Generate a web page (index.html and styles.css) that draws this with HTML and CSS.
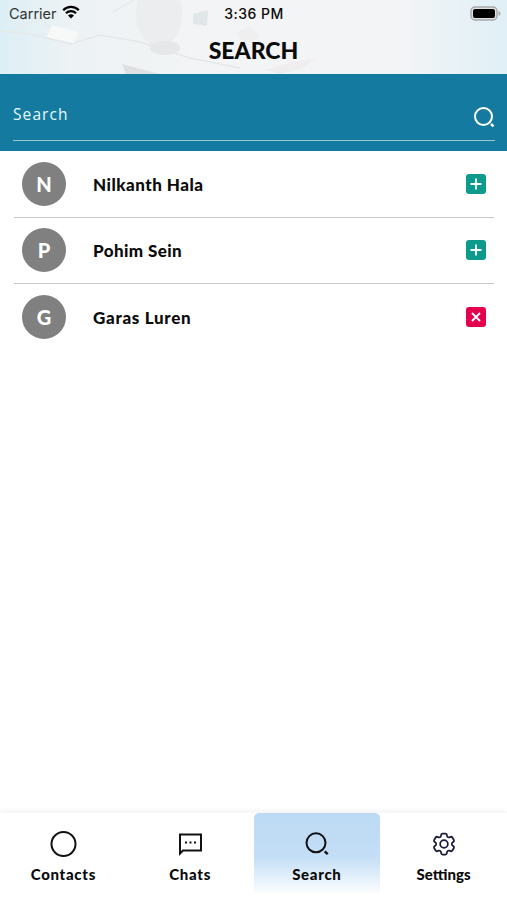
FILE: index.html
```
<!DOCTYPE html>
<html lang="en">
<head>
    <meta charset="UTF-8">
    <meta name="viewport" content="width=device-width, initial-scale=1">
    <title>Search</title>
    <link rel="stylesheet" href="styles.css">
</head>
<body>
    <div class="header">
        <svg class="header-bg" width="507" height="74" viewBox="0 0 507 74">
            <ellipse cx="159" cy="14" rx="23" ry="33" fill="#ebedee"/>
            <ellipse cx="165" cy="48" rx="15" ry="7" fill="#e6e7e8"/>
            <path d="M0 31 35 35 70 44 100 35 140 42 190 58 240 68" fill="none" stroke="#e5e8ea" stroke-width="1.5"/>
            <path d="M10 32 40 18 65 42M113 12 134 0" fill="none" stroke="#e8ebec" stroke-width="2"/>
            <path d="M52 25 78 32 74 43 47 37Z" fill="#f7f9f9"/>
            <path d="M193 14 208 10 207 26 193 24Z" fill="#e1e6e9"/>
            <path d="M122 64 160 74H126Z" fill="#dfe0e2"/>
            <path d="M266 70 292 62 316 58 303 68 280 74Z" fill="#efedee"/>
            <path d="M236 33 250 26 260 38 244 42Z" fill="#efeff0"/>
        </svg>
        <div class="status">
            <div class="carrier">
                <span>Carrier</span>
                <svg width="18" height="14" viewBox="0 0 18 14">
                    <path d="M1.2 5.2a11 11 0 0 1 15.6 0M4 8.2a7 7 0 0 1 10 0" fill="none" stroke="#000" stroke-width="2.3"/>
                    <path d="M9 13.6 6 10.6a4.3 4.3 0 0 1 6 0Z"/>
                </svg>
            </div>
            <span class="time">3:36 PM</span>
            <svg class="battery" width="31" height="15" viewBox="0 0 31 15">
                <rect x="1" y="1" width="26" height="13" rx="4" fill="#e0e2e3" stroke="#a5a8aa" stroke-width="1.4"/>
                <rect x="3" y="3" width="22" height="9" rx="2"/>
                <path d="M28.5 5q2 .8 2 2.5t-2 2.5Z" fill="#a5a8aa"/>
            </svg>
        </div>
        <h1>SEARCH</h1>
    </div>

    <div class="search-area">
        <div class="search-box">
            <span>Search</span>
            <svg width="22" height="22" viewBox="0 0 22 22" fill="none" stroke="#fff" stroke-width="2">
                <circle cx="10.5" cy="10.5" r="8.5"/>
                <path d="m18 18 2.5 2.3" stroke-width="2.4"/>
            </svg>
        </div>
    </div>

    <div class="list">
        <div class="row">
            <div class="avatar">N</div>
            <div class="name name-1">Nilkanth Hala</div>
            <div class="action">
                <svg width="12" height="12" viewBox="0 0 12 12"><path d="M6 .5v11M.5 6h11"/></svg>
            </div>
        </div>
        <div class="row">
            <div class="avatar">P</div>
            <div class="name name-2">Pohim Sein</div>
            <div class="action">
                <svg width="12" height="12" viewBox="0 0 12 12"><path d="M6 .5v11M.5 6h11"/></svg>
            </div>
        </div>
        <div class="row">
            <div class="avatar">G</div>
            <div class="name name-3">Garas Luren</div>
            <div class="action remove">
                <svg width="12" height="12" viewBox="0 0 12 12"><path d="m2 2 8 8M10 2l-8 8"/></svg>
            </div>
        </div>
    </div>

    <div class="tabs">
        <div class="tab">
            <svg width="28" height="28" viewBox="0 0 28 28" fill="none" stroke="#111" stroke-width="2">
                <circle cx="14.5" cy="14" r="12"/>
            </svg>
            <span>Contacts</span>
        </div>
        <div class="tab">
            <svg width="28" height="28" viewBox="0 0 28 28" fill="none" stroke="#111" stroke-width="2">
                <path d="M4 4.5h21v16H7L4 23.5Z"/>
                <path d="M9 12.5h2M13.5 12.500h2M18 12.500h2"/>
            </svg>
            <span>Chats</span>
        </div>
        <div class="tab active">
            <svg width="28" height="28" viewBox="0 0 28 28" fill="none" stroke="#111" stroke-width="2">
                <circle cx="13" cy="12.8" r="9.5"/>
                <path d="m21.7 21.3 3 2.9" stroke-width="2.4"/>
            </svg>
            <span>Search</span>
        </div>
        <div class="tab">
            <svg width="28" height="28" viewBox="0 0 24 24" fill="none" stroke="#1c1b3a" stroke-width="1.5">
                <path d="M9.594 3.94c.09-.542.56-.94 1.11-.94h2.593c.55 0 1.02.398 1.11.94l.213 1.281c.063.374.313.686.645.87.074.04.147.083.22.127.325.196.72.257 1.075.124l1.217-.456a1.125 1.125 0 0 1 1.37.49l1.296 2.247a1.125 1.125 0 0 1-.26 1.431l-1.003.827c-.293.241-.438.613-.43.992a7.723 7.723 0 0 1 0 .255c-.008.378.137.75.43.991l1.004.827c.424.35.534.955.26 1.43l-1.298 2.247a1.125 1.125 0 0 1-1.369.491l-1.217-.456c-.355-.133-.75-.072-1.076.124a6.47 6.47 0 0 1-.22.128c-.331.183-.581.495-.644.869l-.213 1.281c-.09.543-.56.94-1.11.94h-2.594c-.55 0-1.019-.398-1.11-.94l-.213-1.281c-.062-.374-.312-.686-.644-.87a6.52 6.52 0 0 1-.22-.127c-.325-.196-.72-.257-1.076-.124l-1.217.456a1.125 1.125 0 0 1-1.369-.49l-1.297-2.247a1.125 1.125 0 0 1 .26-1.431l1.004-.827c.292-.24.437-.613.43-.991a6.932 6.932 0 0 1 0-.255c.007-.38-.138-.751-.43-.992l-1.004-.827a1.125 1.125 0 0 1-.26-1.43l1.297-2.247a1.125 1.125 0 0 1 1.37-.491l1.216.456c.356.133.751.072 1.076-.124.072-.044.146-.086.22-.128.332-.183.582-.495.644-.869l.214-1.28Z"/>
                <circle cx="12" cy="12" r="3.3"/>
            </svg>
            <span class="settings">Settings</span>
        </div>
    </div>
</body>
</html>
```
FILE: styles.css
```
*{
    box-sizing: border-box;
}
body{
    display: flex;
    flex-direction: column;
    height: 900px;
    margin: 0;
    background-color: #fff;
    color: #0b0b0b;
    font-family: Lato, "Open Sans", sans-serif;
    font-weight: bold;
}
svg{
    display: block;
}
.header{
    position: relative;
    height: 74px;
    background: linear-gradient(90deg, #dceff6 0, #edf2f4 70px, #f2f4f5 190px, #f3f4f6 400px, #e0f0f6 507px);
}
.header-bg{
    position: absolute;
    top: 0;
    left: 0;
}
.status{
    position: relative;
    display: grid;
    grid-template-columns: 1fr auto 1fr;
    align-items: center;
    height: 27px;
    padding: 0 6px 0 9px;
    font-family: Inter, sans-serif;
    font-size: 14px;
    font-weight: 500;
}
.carrier{
    display: flex;
    align-items: center;
    gap: 5px;
    font-size: 14.5px;
    font-weight: normal;
    color: #333;
}
.carrier svg{
    margin-top: -3px;
}
.time{
    margin-left: -2px;
    letter-spacing: .5px;
}
.battery{
    justify-self: end;
    margin-top: -1px;
}
h1{
    position: relative;
    margin: 8px 0 0;
    line-height: 30px;
    font-size: 23px;
    font-weight: 900;
    text-align: center;
}
.search-area{
    height: 77px;
    padding: 0 12px 0 13px;
    background-color: #157a9f;
}
.search-box{
    display: flex;
    align-items: center;
    justify-content: space-between;
    height: 67px;
    padding-top: 18px;
    border-bottom: 1px solid #9fc5d0;
    color: #e6fbff;
    font-family: "Open Sans", sans-serif;
    font-size: 15.5px;
    font-weight: normal;
    letter-spacing: 1.1px;
}
.search-box span{
    margin-top: -4px;
}
.search-box svg{
    margin-top: 1px;
}
.list{
    flex: 1;
    padding: 0 13px 0 14px;
}
.row{
    display: flex;
    align-items: center;
    height: 66px;
    padding: 0 8px;
    border-bottom: 1px solid #c8c8c8;
}
.row:first-child{
    height: 66.5px;
}
.row:last-child{
    border-bottom: none;
}
.avatar{
    width: 44px;
    height: 44px;
    border-radius: 50%;
    background-color: #808080;
    color: #fff;
    line-height: 45px;
    font-size: 20px;
    font-weight: 900;
    text-align: center;
}
.name{
    flex: 1;
    margin-left: 27px;
    padding-top: 1px;
    font-size: 17px;
    font-weight: 900;
}
.name-1{
    letter-spacing: .5px;
}
.name-2{
    letter-spacing: .4px;
}
.name-3{
    letter-spacing: .7px;
}
.action{
    display: flex;
    align-items: center;
    justify-content: center;
    width: 20px;
    height: 20px;
    border-radius: 3px;
    background-color: #0c9a8d;
}
.action path{
    stroke: #fff;
    stroke-width: 1.8;
}
.remove{
    background-color: #e5004f;
}
.tabs{
    display: flex;
    height: 87px;
    box-shadow: 0 -3px 5px #f5f5f5;
}
.tab{
    display: flex;
    flex: 1;
    flex-direction: column;
    align-items: center;
    padding-top: 17px;
    border-radius: 5px 5px 0 0;
    line-height: 20px;
    font-size: 15px;
    font-weight: 900;
}
.tab span{
    margin-top: 6px;
    letter-spacing: .7px;
}
.tab .settings{
    letter-spacing: 0;
}
.active{
    background: linear-gradient(#bddaf4 0, #c3def6 50%, #fff 95%);
}
```
